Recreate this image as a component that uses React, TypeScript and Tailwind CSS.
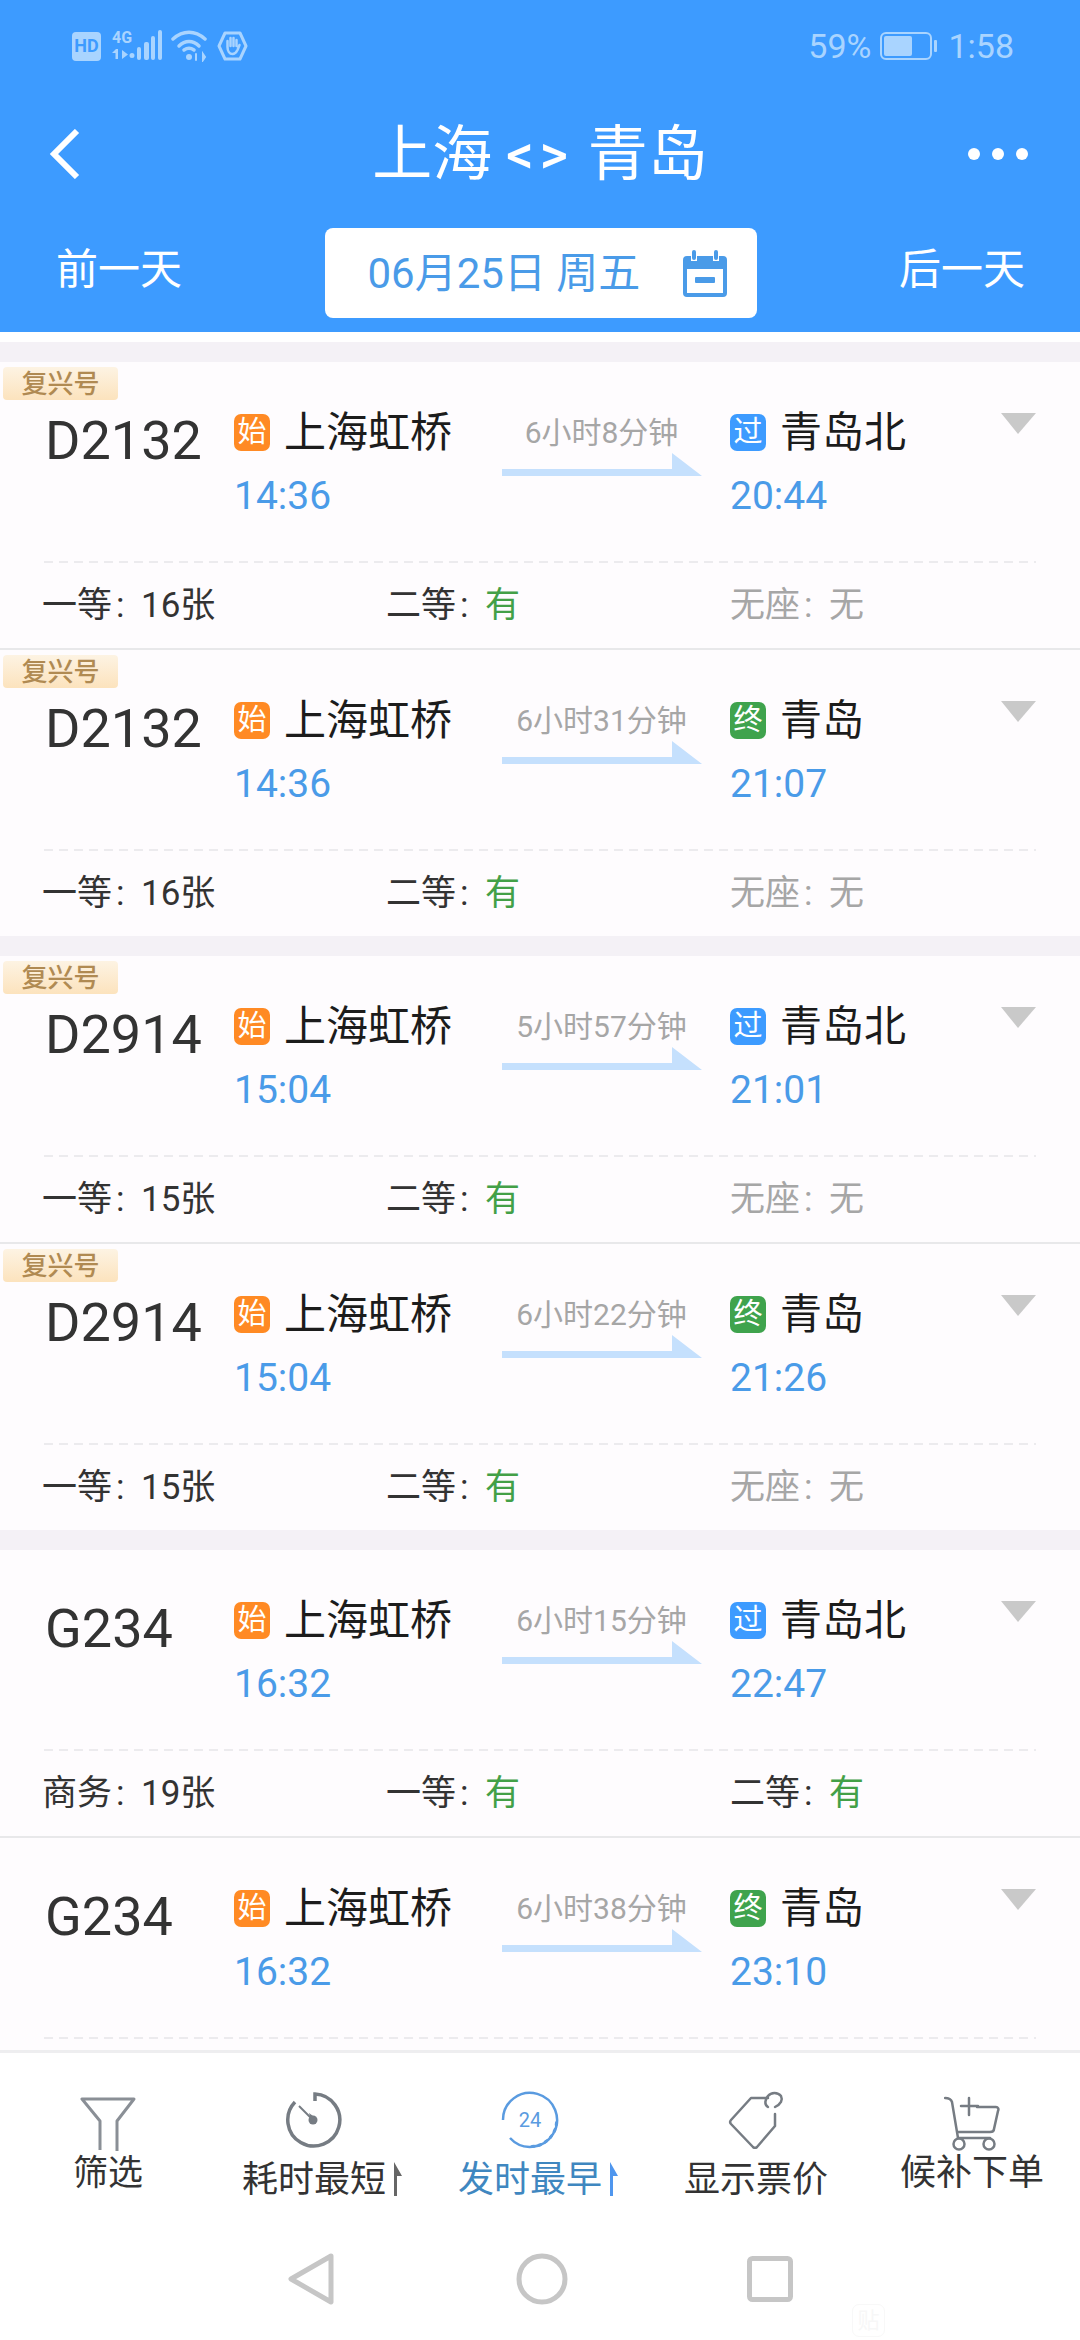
type Seat = { name: string; value: string };
type Train = {
  no: string;
  fuxing?: boolean;
  from: string;
  depart: string;
  duration: string;
  to: string;
  toKind: "过" | "终";
  arrive: string;
  seats: Seat[];
  last?: boolean;
  clipped?: boolean;
};

const dSeats = (n: string): Seat[] => [
  { name: "一等", value: n },
  { name: "二等", value: "有" },
  { name: "无座", value: "无" },
];
const gSeats: Seat[] = [
  { name: "商务", value: "19张" },
  { name: "一等", value: "有" },
  { name: "二等", value: "有" },
];

const trains: Train[][] = [
  [
    { no: "D2132", fuxing: true, from: "上海虹桥", depart: "14:36", duration: "6小时8分钟", to: "青岛北", toKind: "过", arrive: "20:44", seats: dSeats("16张") },
    { no: "D2132", fuxing: true, from: "上海虹桥", depart: "14:36", duration: "6小时31分钟", to: "青岛", toKind: "终", arrive: "21:07", seats: dSeats("16张"), last: true },
  ],
  [
    { no: "D2914", fuxing: true, from: "上海虹桥", depart: "15:04", duration: "5小时57分钟", to: "青岛北", toKind: "过", arrive: "21:01", seats: dSeats("15张") },
    { no: "D2914", fuxing: true, from: "上海虹桥", depart: "15:04", duration: "6小时22分钟", to: "青岛", toKind: "终", arrive: "21:26", seats: dSeats("15张"), last: true },
  ],
  [
    { no: "G234", from: "上海虹桥", depart: "16:32", duration: "6小时15分钟", to: "青岛北", toKind: "过", arrive: "22:47", seats: gSeats },
    { no: "G234", from: "上海虹桥", depart: "16:32", duration: "6小时38分钟", to: "青岛", toKind: "终", arrive: "23:10", seats: gSeats, clipped: true },
  ],
];

function StatusIcons() {
  return (
    <div className="flex items-center text-[#a9d4ff]">
      <div className="flex items-center justify-center w-[29px] h-[29px] rounded-[4px] bg-[#a9d4ff] text-[#3d9bff] text-[18px] font-bold leading-none">
        HD
      </div>
      {/* 4G with its up/down arrows, then the signal bars */}
      <div className="flex flex-col w-[25px] ml-[11px] text-[16px] font-bold leading-[17px] -mt-[2px]">
        <span>4G</span>
        <svg width="25" height="12" viewBox="0 0 25 12" fill="currentColor" className="mt-[3px]">
          <path d="M0 4l4-4h2v10H3.500V4zM10 1v9l6-4.500zM20 4a2.500 2.500 0 1 1 0 5 2.500 2.500 0 0 1 0-5z" />
        </svg>
      </div>
      <svg width="25" height="32" viewBox="0 0 25 32" fill="currentColor">
        <rect x="0" y="17" width="4" height="13" rx="2" />
        <rect x="7" y="12" width="5" height="18" rx="2" />
        <rect x="14" y="6" width="4" height="24" rx="2" />
        <rect x="21" y="0" width="4" height="30" rx="2" />
      </svg>
      <svg width="36" height="32" viewBox="0 0 36 32" fill="none" stroke="currentColor" strokeWidth="3.500" strokeLinecap="round" className="ml-[9px]">
        <path d="M2 9c10-9 22-9 32 0" />
        <path d="M8 16c6-6 14-6 20 0" />
        <circle cx="18" cy="27" r="3" fill="currentColor" stroke="none" />
        <path d="M13 20c3-2 7-2 10 0" />
        <path d="M25 24v6M32 24l2 3-2 3z" strokeWidth="2" />
      </svg>
      <svg width="31" height="30" viewBox="0 0 31 30" fill="none" stroke="currentColor" className="ml-[10px]">
        <path d="M8 2h15l6 13-6 13H8L2 15z" strokeWidth="3" strokeLinejoin="round" />
        <path d="M10.500 15V10M13.500 15V7M16.500 15V7M19.500 15V9M10.500 14v2c0 4 2 7 5 7s4-2 5-4l2-5" strokeWidth="2.500" strokeLinecap="round" />
      </svg>
    </div>
  );
}

function Header() {
  return (
    <header className="flex flex-col h-[332px] bg-[#3d9bff] text-white">
      <div className="flex items-center justify-between h-[92px] pl-[72px] pr-[66px] text-[#a9d4ff]">
        <StatusIcons />
        <div className="flex items-center text-[34px]">
          <span>59%</span>
          <svg width="58" height="30" viewBox="0 0 58 30" fill="none" className="ml-[9px] mr-[10px]">
            <rect x="1" y="2" width="50" height="26" rx="5" stroke="#a9d4ff" strokeWidth="2" />
            <rect x="4" y="5" width="28" height="20" rx="2" fill="#a9d4ff" />
            <rect x="54" y="9" width="3" height="12" rx="1" fill="#a9d4ff" />
          </svg>
          <span>1:58</span>
        </div>
      </div>
      <div className="flex items-center justify-between h-[124px] pl-[48px] pr-[52px]">
        <svg width="32" height="50" viewBox="0 0 32 50" fill="none" stroke="white" strokeWidth="6">
          <path d="M29 2 6 25l23 23" />
        </svg>
        <h1 className="flex items-center gap-[14px] text-[60px] font-normal leading-none ml-[32px] mt-[2px]">
          <span>上海</span>
          <span className="text-[54px] font-medium tracking-[6px]">&lt;&gt;</span>
          <span>青岛</span>
        </h1>
        <div className="flex items-center gap-[12px]">
          <span className="size-[12px] rounded-full bg-white" />
          <span className="size-[12px] rounded-full bg-white" />
          <span className="size-[12px] rounded-full bg-white" />
        </div>
      </div>
      <div className="flex items-start justify-between pl-[56px] pr-[55px] pt-[12px] text-[42px]">
        <span className="leading-[84px]">前一天</span>
        <div className="flex items-center justify-between w-[432px] h-[90px] pl-[43px] pr-[30px] rounded-[8px] bg-white text-[#4a9be8] text-[42px]">
          <span>06月25日 周五</span>
          <svg width="44" height="48" viewBox="0 0 44 48" fill="#4a9be8">
            <path d="M4 7h4v5h6V7h16v5h6V7h4a4 4 0 0 1 4 4v33a4 4 0 0 1-4 4H4a4 4 0 0 1-4-4V11a4 4 0 0 1 4-4zm0 13v24h36V20H4z" />
            <rect x="9" y="1" width="4" height="10" rx="2" />
            <rect x="31" y="1" width="4" height="10" rx="2" />
            <rect x="12" y="28" width="20" height="6" rx="1" />
          </svg>
        </div>
        <span className="leading-[84px]">后一天</span>
      </div>
    </header>
  );
}

function StopBadge({ text }: { text: string }) {
  const color = text === "始" ? "bg-[#ff8a24]" : text === "过" ? "bg-[#3d9bff]" : "bg-[#3fa34d]";
  return (
    <span className={`flex items-center justify-center w-[36px] h-[37px] rounded-[7px] text-white text-[29px] leading-none shrink-0 ${color}`}>
      {text}
    </span>
  );
}

function TrainRow({ train }: { train: Train }) {
  return (
    <div className={`relative bg-[#fefcfe] ${train.last ? "h-[286px]" : "h-[288px] border-b-2 border-[#e8e8ea]"}`}>
      {train.fuxing && (
        <span className="absolute left-[3px] top-[5px] flex items-center justify-center w-[115px] h-[33px] rounded-[4px] bg-gradient-to-b from-[#fdf3e3] to-[#fce3bd] text-[#b08a52] text-[26px] font-medium leading-none">
          复兴号
        </span>
      )}
      <div className="flex h-[201px] mx-[44px] bg-[repeating-linear-gradient(90deg,#ecebee_0,#ecebee_9px,transparent_9px,transparent_15px)] bg-[length:100%_2px] bg-bottom bg-no-repeat">
        <div className="w-[190px] pl-[1px] pt-[49px] text-[54px] leading-[60px] text-[#333333]">{train.no}</div>
        <div className="w-[267px] pt-[52px]">
          <div className="flex items-center gap-[14px] text-[42px] leading-[37px] text-[#1c1c1c]">
            <StopBadge text="始" />
            {train.from}
          </div>
          <div className="mt-[23px] text-[39px] leading-[44px] text-[#4a9be8]">{train.depart}</div>
        </div>
        <div className="flex flex-col items-center w-[229px] pr-[28px] pt-[53px]">
          <span className="text-[30px] leading-[36px] text-[#a6a6a6]">{train.duration}</span>
          <svg width="200" height="24" viewBox="0 0 200 24" className="mt-[2px]" fill="#c5e0fd">
            <path d="M0 16h170V0l30 23H0z" />
          </svg>
        </div>
        <div className="flex-1 pt-[52px]">
          <div className="flex items-start justify-between">
            <div className="flex items-center gap-[14px] text-[42px] leading-[37px] text-[#1c1c1c]">
              <StopBadge text={train.toKind} />
              {train.to}
            </div>
            <svg width="36" height="22" viewBox="0 0 36 22" fill="#c9c9c9" className="-mt-[2px]">
              <path d="M1 1h35L18 22z" />
            </svg>
          </div>
          <div className="mt-[23px] text-[39px] leading-[44px] text-[#4a9be8]">{train.arrive}</div>
        </div>
      </div>
      {!train.clipped && (
        <div className="grid grid-cols-3 pl-[42px] pt-[2px] w-[1074px] h-[85px] items-center text-[35px] text-[#333333]">
          {train.seats.map((seat) => (
            <div key={seat.name} className={`flex ${seat.value === "无" ? "text-[#a6a6a6]" : ""}`}>
              <span>{seat.name}</span>
              <span className="w-[29px] pl-[4px]">:</span>
              <span className={seat.value === "有" ? "text-[#43a047]" : ""}>{seat.value}</span>
            </div>
          ))}
        </div>
      )}
    </div>
  );
}

function ArrowMark({ blue }: { blue?: boolean }) {
  return (
    <svg width="12" height="34" viewBox="0 0 12 34" fill={blue ? "#4f96ee" : "#666666"} className="ml-[8px] mt-[4px]">
      <path d="M0 0l8 14H3v20H0z" />
    </svg>
  );
}

function BottomBar() {
  return (
    <div className="grid grid-cols-5 h-[173px] bg-white border-t-[3px] border-[#eeeef0] text-[36px] leading-[44px] text-[#333333]">
      <div className="flex flex-col items-center pt-[43px]">
        <svg width="56" height="56" viewBox="0 0 56 56" fill="none" stroke="#8a8f96" strokeWidth="3" strokeLinejoin="round">
          <path d="M20 54V25L2 3h52L37 25v30" />
        </svg>
        <span className="text-[35px]">筛选</span>
      </div>
      <div className="flex flex-col items-center pt-[38px]">
        <svg width="58" height="58" viewBox="0 0 58 58" fill="none" stroke="#767c83" strokeWidth="3.500" className="-ml-[20px]">
          <path d="M30 10V3a26 26 0 1 1-20 8" />
          <path d="M14 15 28 29" strokeWidth="2" />
          <circle cx="28" cy="29" r="4.500" fill="#767c83" stroke="none" />
          <path d="M24 22 32 28l-5 5z" fill="#767c83" stroke="none" />
        </svg>
        <div className="flex items-start mt-[9px]">
          耗时最短
          <ArrowMark />
        </div>
      </div>
      <div className="flex flex-col items-center pt-[38px] text-[#3f87c0]">
        <svg width="58" height="58" viewBox="0 0 58 58" fill="none" stroke="#5a9be0" strokeWidth="3" className="-ml-[20px]">
          <path d="M47 49A27 27 0 1 0 29 56" strokeWidth="2.500" transform="rotate(90 29 29)" />
          <path d="M31 55.500C44 55 55 44 55.500 31" strokeDasharray="2 5" strokeLinecap="round" />
          <text x="29" y="36" textAnchor="middle" fontSize="20" fill="#5a9be0" stroke="none">24</text>
        </svg>
        <div className="flex items-start mt-[9px]">
          发时最早
          <ArrowMark blue />
        </div>
      </div>
      <div className="flex flex-col items-center pt-[38px]">
        <svg width="58" height="58" viewBox="0 0 58 58" fill="none" stroke="#767c83" strokeWidth="2.500" strokeLinejoin="round" strokeLinecap="round" className="ml-[1px]">
          <path d="M40 7H23L3 29a3 3 0 0 0 0 4l22 23a3 3 0 0 0 4 0l18-21V23" />
          <path d="M40 16c-4-2-3-8 0-11 3-4 10-4 13 0 2 4 0 8-6 11" />
        </svg>
        <span className="mt-[9px]">显示票价</span>
      </div>
      <div className="flex flex-col items-center pt-[43px]">
        <svg width="56" height="56" viewBox="0 0 56 56" fill="none" stroke="#767c83" strokeWidth="2.500" strokeLinecap="round" className="-mb-[1px]">
          <path d="M1 2c4 0 6 1 7 4l6 36h32" />
          <path d="M25 2v17M17 10h17M33 11h19c2 0 3 2 2 4l-4 18c0 2-2 3-4 3H14" />
          <circle cx="15" cy="48" r="5.500" />
          <circle cx="45" cy="48" r="5.500" />
        </svg>
        <span>候补下单</span>
      </div>
    </div>
  );
}

function NavBar() {
  return (
    <div className="relative flex items-start justify-center gap-[182px] h-[117px] pt-[30px] bg-white">
      <svg width="46" height="52" viewBox="0 0 46 52" fill="none" stroke="#c6c6c6" strokeWidth="5" strokeLinejoin="round">
        <path d="M43 3 3 26l40 23z" />
      </svg>
      <svg width="52" height="52" viewBox="0 0 52 52" fill="none" stroke="#c6c6c6" strokeWidth="5">
        <circle cx="26" cy="26" r="23" />
      </svg>
      <svg width="46" height="46" viewBox="0 0 46 46" fill="none" stroke="#c6c6c6" strokeWidth="5" className="mt-[3px] -ml-[3px]">
        <rect x="2.500" y="2.500" width="41" height="41" rx="3" />
      </svg>
      <span className="absolute left-[852px] top-[81px] flex items-center justify-center size-[33px] rounded-[7px] border border-[#f8f8f8] text-[22px] leading-none text-[#f7f7f7]">
        贴
      </span>
    </div>
  );
}

export default function App() {
  return (
    <div className="flex flex-col w-[1080px] h-[2340px] overflow-hidden bg-white font-['Roboto','Noto_Sans_CJK_SC',sans-serif]">
      <Header />
      <main className="flex-1 min-h-0 overflow-hidden pt-[10px]">
        {trains.map((group, i) => (
          <div key={i} className="pt-[20px] bg-[#f4f1f6]">
            {group.map((train) => (
              <TrainRow key={train.no + train.to} train={train} />
            ))}
          </div>
        ))}
      </main>
      <BottomBar />
      <NavBar />
    </div>
  );
}
